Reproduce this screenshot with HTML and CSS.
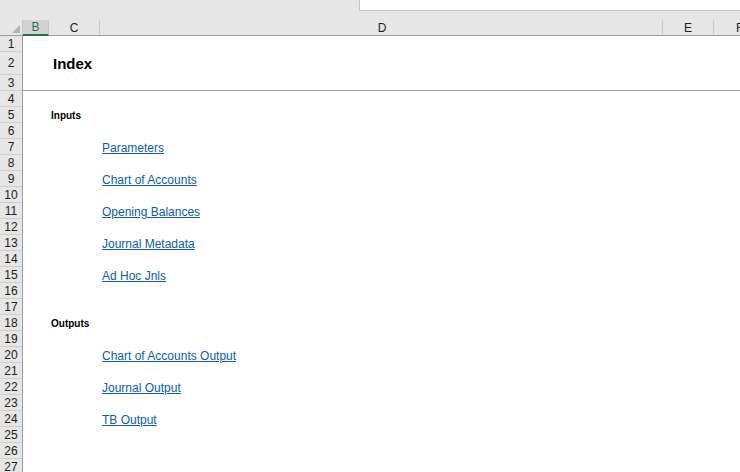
FILE: index.html
```html
<!DOCTYPE html>
<html>
<head>
<meta charset="utf-8">
<link rel="stylesheet" href="styles.css">
</head>
<body>
<div class="app">
  <div class="topbar"><div class="formula"></div></div>
  <div class="colheads">
    <div class="corner"><svg width="23" height="16" viewBox="0 0 23 16"><polygon points="20,5 20,13 12,13" fill="#b4b4b4"/></svg></div>
    <div class="ch sel">B</div>
    <div class="ch c">C</div>
    <div class="ch d">D</div>
    <div class="ch e">E</div>
    <div class="ch f">F</div>
  </div>
  <div class="main">
    <div class="rowheads">
      <div class="rh r16">1</div>
      <div class="rh r23">2</div>
      <div class="rh r16">3</div>
      <div class="rh">4</div><div class="rh">5</div><div class="rh">6</div><div class="rh">7</div>
      <div class="rh">8</div><div class="rh">9</div><div class="rh">10</div><div class="rh">11</div>
      <div class="rh">12</div><div class="rh">13</div><div class="rh">14</div><div class="rh">15</div>
      <div class="rh">16</div><div class="rh">17</div><div class="rh">18</div><div class="rh">19</div>
      <div class="rh">20</div><div class="rh">21</div><div class="rh">22</div><div class="rh">23</div>
      <div class="rh">24</div><div class="rh">25</div><div class="rh">26</div><div class="rh">27</div>
    </div>
    <div class="sheet">
      <div class="row r16"></div>
      <div class="row r23"><div class="cell colc title">Index</div></div>
      <div class="row r16 ruled"></div>
      <div class="row"></div>
      <div class="row"><div class="cell colc section">Inputs</div></div>
      <div class="row"></div>
      <div class="row"><a class="cell cold link" href="#">Parameters</a></div>
      <div class="row"></div>
      <div class="row"><a class="cell cold link" href="#">Chart of Accounts</a></div>
      <div class="row"></div>
      <div class="row"><a class="cell cold link" href="#">Opening Balances</a></div>
      <div class="row"></div>
      <div class="row"><a class="cell cold link" href="#">Journal Metadata</a></div>
      <div class="row"></div>
      <div class="row"><a class="cell cold link" href="#">Ad Hoc Jnls</a></div>
      <div class="row"></div>
      <div class="row"></div>
      <div class="row"><div class="cell colc section">Outputs</div></div>
      <div class="row"></div>
      <div class="row"><a class="cell cold link" href="#">Chart of Accounts Output</a></div>
      <div class="row"></div>
      <div class="row"><a class="cell cold link" href="#">Journal Output</a></div>
      <div class="row"></div>
      <div class="row"><a class="cell cold link" href="#">TB Output</a></div>
      <div class="row"></div>
      <div class="row"></div>
      <div class="row"></div>
    </div>
  </div>
</div>
</body>
</html>
```
FILE: styles.css
```css
html, body {
  margin: 0;
  padding: 0;
  background: #ffffff;
}
.app {
  width: 740px;
  height: 472px;
  overflow: hidden;
  font-family: "Liberation Sans", Arial, sans-serif;
  display: flex;
  flex-direction: column;
}
.topbar {
  height: 20px;
  background: #e6e6e6;
  display: flex;
  flex-shrink: 0;
}
.formula {
  margin-left: 359px;
  flex: 1;
  height: 10px;
  background: #ffffff;
  border-left: 1px solid #c6c6c6;
  border-bottom: 1px solid #c6c6c6;
}
.colheads {
  height: 15px;
  display: flex;
  background: #e6e6e6;
  border-bottom: 1px solid #9e9e9e;
  flex-shrink: 0;
}
.corner {
  width: 22px;
  border-right: 1px solid #c4c4c4;
  flex-shrink: 0;
}
.corner svg { display: block; }
.ch {
  flex-shrink: 0;
  font-size: 12px;
  line-height: 16px;
  text-align: center;
  color: #222;
  border-right: 1px solid #c8c8c8;
  box-sizing: border-box;
}
.ch.sel {
  width: 26px;
  background: #d3d3d3;
  color: #217346;
  border-bottom: 2px solid #217346;
  line-height: 15px;
  margin-bottom: -1px;
  height: 16px;
}
.ch.c { width: 51px; }
.ch.d { width: 563px; padding-left: 2px; }
.ch.e { width: 51px; }
.ch.f { flex: 1; border-right: none; text-align: left; padding-left: 22px; }
.main {
  display: flex;
  flex: 1;
}
.rowheads {
  width: 22px;
  background: #e6e6e6;
  border-right: 1px solid #9e9e9e;
  flex-shrink: 0;
}
.rh {
  height: 16px;
  box-sizing: border-box;
  border-bottom: 1px solid #cfcfcf;
  font-size: 12px;
  line-height: 16px;
  text-align: center;
  color: #222;
}
.rh.r23 { height: 23px; line-height: 23px; }
.sheet {
  flex: 1;
}
.row {
  height: 16px;
  box-sizing: border-box;
  display: grid;
  grid-template-columns: 26px 51px 563px 51px 1fr;
  align-items: end;
}
.row.r23 { height: 23px; }
.row.ruled { border-bottom: 1px solid #a0a0a0; }
.cell {
  white-space: nowrap;
  overflow: visible;
}
.colc { grid-column: 2; padding-left: 2px; }
.cold { grid-column: 3; padding-left: 2px; }
.title {
  font-size: 15px;
  font-weight: bold;
  color: #000;
  line-height: 18px;
  padding-left: 4px;
  padding-bottom: 2px;
}
.section {
  font-size: 10px;
  font-weight: bold;
  color: #000;
  line-height: 14px;
  padding-bottom: 0;
}
.link {
  font-size: 12px;
  color: #0b5cad;
  text-decoration: underline;
  line-height: 14px;
  padding-bottom: 0;
}
```
